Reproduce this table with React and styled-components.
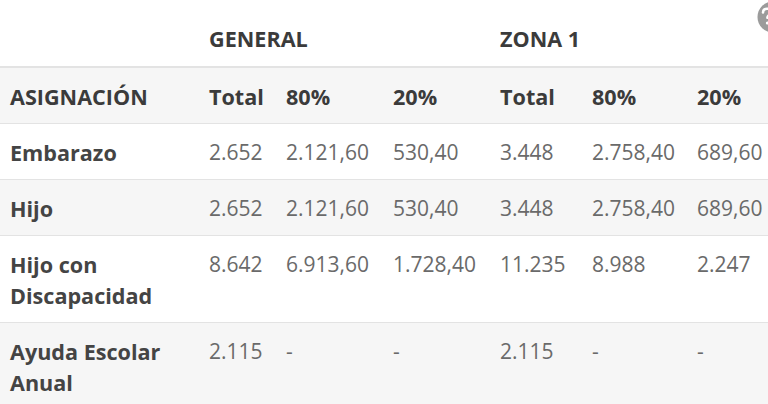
import styled, { createGlobalStyle } from "styled-components";

const GlobalStyle = createGlobalStyle`
  html, body {
    margin: 0;
    padding: 0;
    background: #ffffff;
  }
  body {
    font-family: "Open Sans", "Liberation Sans", sans-serif;
    overflow: hidden;
  }
`;

const columns = [199, 77, 107, 107, 92, 105, 113];

const rows = [
  { label: "Embarazo", values: ["2.652", "2.121,60", "530,40", "3.448", "2.758,40", "689,60"] },
  { label: "Hijo", values: ["2.652", "2.121,60", "530,40", "3.448", "2.758,40", "689,60"] },
  { label: "Hijo con Discapacidad", values: ["8.642", "6.913,60", "1.728,40", "11.235", "8.988", "2.247"] },
  { label: "Ayuda Escolar Anual", values: ["2.115", "-", "-", "2.115", "-", "-"] },
];

// little round help button peeking in at the top right corner
const HelpIcon = () => (
  <svg width="32" height="32" viewBox="0 0 32 32">
    <circle cx="16" cy="16" r="15.5" fill="#9b9b9b" />
    <path
      d="M6 11.5c0-2.4 1.8-3.8 4-3.8s4 1.4 4 3.4c0 2.6-3.6 2.8-3.6 5.6"
      fill="none"
      stroke="#ffffff"
      strokeWidth="2.6"
      strokeLinecap="round"
    />
    <circle cx="10.4" cy="22" r="1.6" fill="#ffffff" />
  </svg>
);

const App = () => {
  return (
    <Page>
      <GlobalStyle />
      <Table>
        <colgroup>
          {columns.map((w, i) => (
            <col key={i} style={{ width: w }} />
          ))}
        </colgroup>
        <thead>
          <GroupRow>
            <GroupCell />
            <GroupCell colSpan={3}>GENERAL</GroupCell>
            <GroupCell colSpan={3}>ZONA 1</GroupCell>
          </GroupRow>
        </thead>
        <tbody>
          <Row $shaded>
            <HeadCell>ASIGNACIÓN</HeadCell>
            <HeadCell>Total</HeadCell>
            <HeadCell>80%</HeadCell>
            <HeadCell>20%</HeadCell>
            <HeadCell>Total</HeadCell>
            <HeadCell>80%</HeadCell>
            <HeadCell>20%</HeadCell>
          </Row>
          {rows.map((row, i) => (
            <Row key={row.label} $shaded={i % 2 === 1}>
              <LabelCell>{row.label}</LabelCell>
              {row.values.map((v, j) => (
                <ValueCell key={j}>{v}</ValueCell>
              ))}
            </Row>
          ))}
        </tbody>
      </Table>
      <HelpBadge>
        <HelpIcon />
      </HelpBadge>
    </Page>
  );
};

const Page = styled.div`
  position: relative;
  width: 768px;
  height: 404px;
  overflow: hidden;
  background: #ffffff;
`;

const Table = styled.table`
  width: 800px;
  table-layout: fixed;
  border-collapse: collapse;
  font-size: 21px;
  line-height: 31px;
`;

const GroupRow = styled.tr`
  border-bottom: 2px solid #e3e3e3;
`;

const GroupCell = styled.th`
  text-align: left;
  font-size: 21.6px;
  font-weight: 700;
  color: #3b3b3b;
  padding: 23px 14px 12px 10px;
  vertical-align: top;
`;

const Row = styled.tr`
  background: ${(p) => (p.$shaded ? "#f6f6f6" : "#ffffff")};
  border-bottom: 1px solid #e3e3e3;
`;

const Cell = styled.td`
  text-align: left;
  vertical-align: top;
  padding: 13px 14px 11px 10px;
`;

const HeadCell = styled(Cell)`
  font-size: 21.6px;
  font-weight: 700;
  color: #3b3b3b;
  white-space: nowrap;
`;

const LabelCell = styled(Cell)`
  font-size: 21.6px;
  font-weight: 700;
  color: #444444;
`;

const ValueCell = styled(Cell)`
  color: #6a6a6a;
  white-space: nowrap;
`;

const HelpBadge = styled.div`
  position: absolute;
  top: 1px;
  left: 757px;
  width: 32px;
  height: 32px;
  line-height: 0;
`;

export default App;
